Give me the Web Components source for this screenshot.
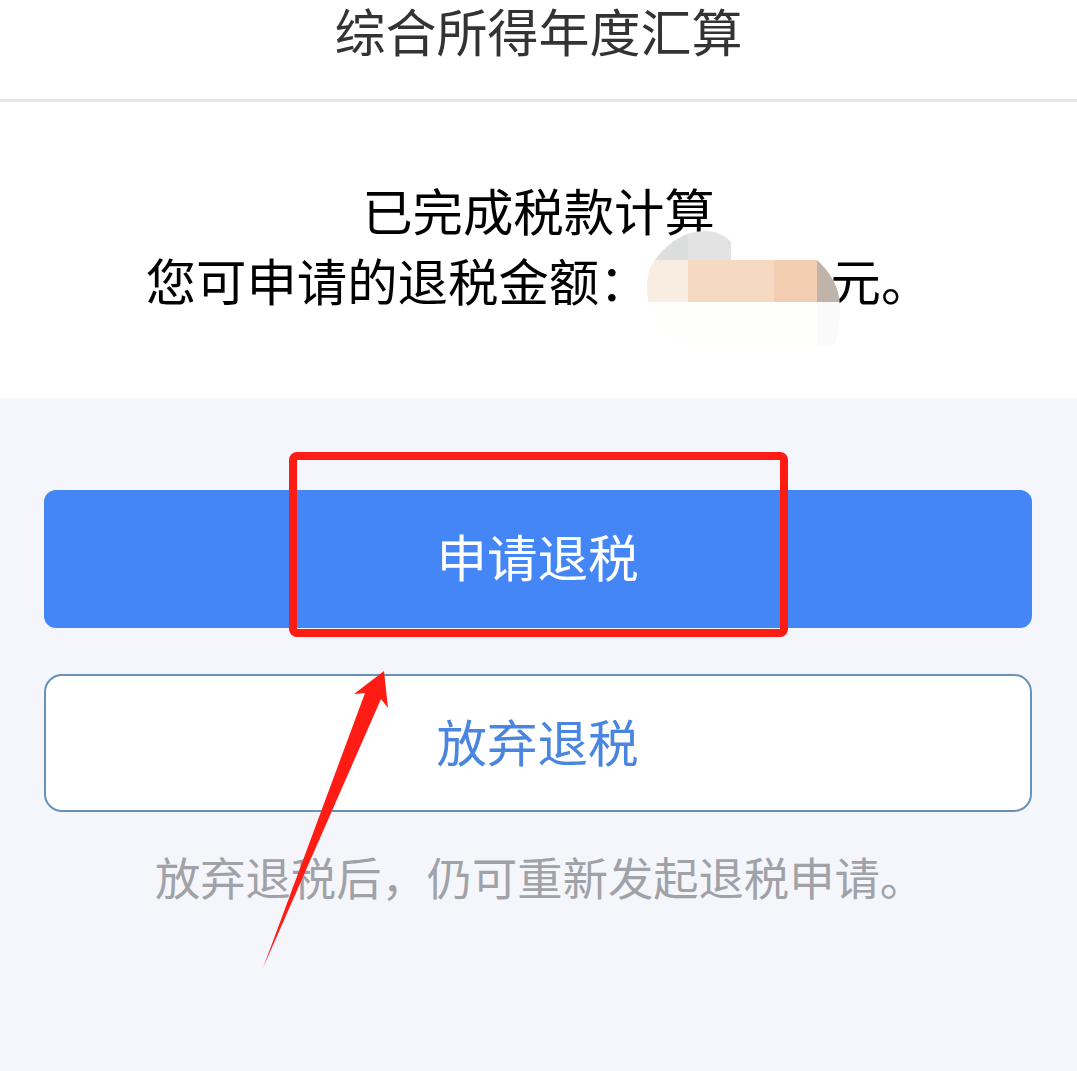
<!DOCTYPE html>
<html lang="zh"><head><meta charset="utf-8"><title>综合所得年度汇算</title>
<style>
html,body{margin:0;padding:0;background:#f5f6fc}
body{font-family:"Noto Sans CJK SC","Noto Sans",sans-serif;width:1077px;height:1071px;overflow:hidden}
</style></head><body>
<tax-page></tax-page>
<script>
function def(name,html){customElements.define(name,class extends HTMLElement{constructor(){super();this.attachShadow({mode:"open"}).innerHTML=html}})}
def("app-header",`<style>:host{display:flex;justify-content:center;align-items:center;box-sizing:border-box;height:102px;padding-bottom:31px;background:#fff;border-bottom:3px solid #e6e6e8;color:#333;font-family:"Liberation Sans","Noto Sans CJK SC",sans-serif;font-size:51px;line-height:1}</style><slot></slot>`);
def("mosaic-mask",`<style>:host{display:inline-block;position:relative;width:181px;height:1em;vertical-align:baseline}svg{position:absolute;left:-3px;top:-20px;overflow:visible}</style>
<svg width="193" height="114" viewBox="647 229 193 114" aria-hidden="true"><defs><clipPath id="c"><path d="M647 287C647 272 650 264 655 258C668 240 685 229 705 229C716 229 725 233 731 240V258H817C830 270 840 285 840 305C840 320 838 332 835 343H680C660 330 647 310 647 287Z"/></clipPath></defs>
<g clip-path="url(#c)"><rect x="647" y="229" width="41" height="29" fill="#dcdddd"/><rect x="688" y="229" width="43" height="29" fill="#e3e3e3"/><rect x="647" y="258" width="41" height="42" fill="#f9ede2"/><rect x="688" y="258" width="86" height="42" fill="#f5d9c0"/><rect x="774" y="258" width="43" height="42" fill="#f2cdb0"/><rect x="817" y="258" width="23" height="42" fill="#bfb3aa"/><rect x="647" y="300" width="170" height="43" fill="#fefefd"/><rect x="817" y="300" width="23" height="43" fill="#fafafa"/></g></svg>`);
def("result-panel",`<style>:host{display:flex;flex-direction:column;align-items:center;box-sizing:border-box;height:296px;padding-top:73px;background:#fff;color:#000;font-size:50.4px;line-height:70px;white-space:nowrap}</style><slot></slot>`);
def("action-button",`<style>:host{display:flex;justify-content:center;align-items:center;box-sizing:border-box;width:988px;height:138px;padding-bottom:8px;border-radius:12px;background:#4486f6;color:#fff;font-size:50.5px;line-height:1}
:host([outline]){background:#fff;border:2px solid #6692b8;border-radius:18px;color:#4a86e0;padding-bottom:6px}</style><slot></slot>`);
def("help-note",`<style>:host{display:block;margin-top:-4px;padding-left:5px;text-align:center;color:#a0a2a7;font-size:45.3px;line-height:1;white-space:nowrap}</style><slot></slot>`);
def("action-panel",`<style>:host{display:flex;flex-direction:column;align-items:center;box-sizing:border-box;height:673px;padding:92px 2px 0 0;gap:46px;background:#f5f6fc}</style><slot></slot>`);
def("red-annotations",`<style>:host{display:block;position:absolute;left:0;top:0;width:1077px;height:1071px;pointer-events:none}svg{display:block}</style>
<svg width="1077" height="1071" viewBox="0 0 1077 1071" aria-hidden="true"><rect x="293" y="456" width="491" height="177" rx="4" fill="none" stroke="#ff1c14" stroke-width="8"/>
<path d="M263 968L365 693L354 694L384 671L388 708L381 699Z" fill="#ff1c14"/></svg>`);
def("tax-page",`<style>:host{display:block;position:relative;width:1077px;height:1071px}</style>
<app-header>综合所得年度汇算</app-header>
<result-panel><div>已完成税款计算</div><div>您可申请的退税金额：<mosaic-mask></mosaic-mask>元。</div></result-panel>
<action-panel><action-button>申请退税</action-button><action-button outline>放弃退税</action-button><help-note>放弃退税后，仍可重新发起退税申请。</help-note></action-panel>
<red-annotations></red-annotations>`);
</script></body></html>
